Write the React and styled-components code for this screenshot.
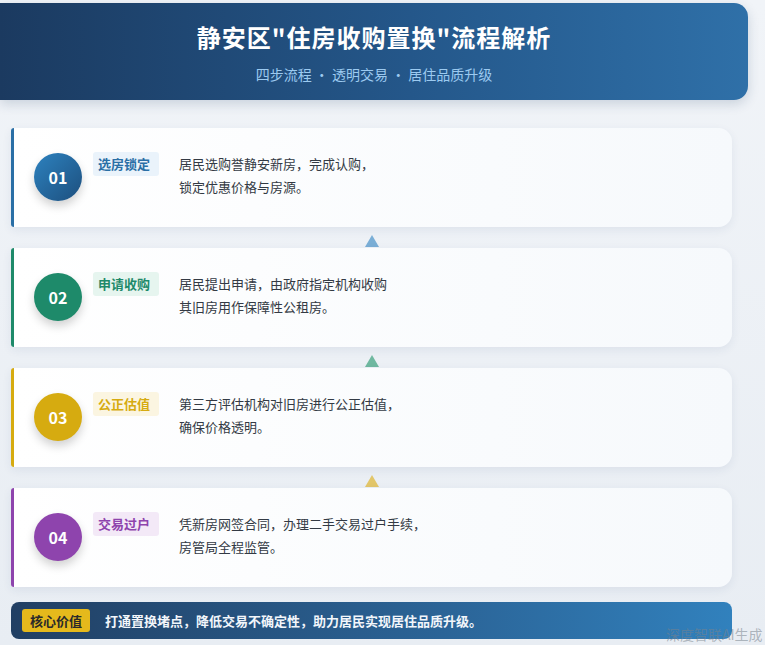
import React from "react";
import styled, { createGlobalStyle } from "styled-components";

const Global = createGlobalStyle`
  html, body { margin: 0; padding: 0; }
  body {
    width: 765px; height: 645px; overflow: hidden;
    background: linear-gradient(180deg, #f1f4f8 0%, #e8edf3 100%);
    font-family: "Noto Sans CJK SC", "Noto Sans", sans-serif;
  }
`;

const Page = styled.div`
  position: relative;
  width: 765px;
  height: 645px;
  padding: 3px 33px 0 0;
  box-sizing: border-box;
`;

const Header = styled.header`
  height: 97px;
  border-radius: 0 14px 14px 0;
  background: linear-gradient(90deg, #1b3a60 0%, #24578a 55%, #2f70a8 100%);
  box-shadow: 0 4px 12px rgba(30, 60, 100, 0.18);
  display: flex;
  flex-direction: column;
  align-items: center;
  justify-content: center;
  gap: 10px;
  margin-right: -16px;
`;

const Title = styled.h1`
  margin: 0;
  color: #fff;
  font-size: 24px;
  font-weight: 700;
  letter-spacing: 1px;
`;

const Sub = styled.div`
  color: #9ccaf0;
  font-size: 14px;
`;

const Steps = styled.div`
  display: flex;
  flex-direction: column;
  padding: 28px 0 0 11px;
`;

const Card = styled.div`
  height: 99px;
  box-sizing: border-box;
  background: linear-gradient(90deg, #ffffff 0%, #f6f9fc 100%);
  border-left: 3px solid ${(p) => p.$c};
  border-radius: 3px 14px 14px 3px;
  box-shadow: 0 3px 10px rgba(40, 70, 110, 0.08);
  display: flex;
  align-items: flex-start;
  padding: 24px 0 0 20px;
`;

const Num = styled.div`
  width: 48px;
  height: 48px;
  margin-top: 1px;
  border-radius: 50%;
  background: ${(p) => p.$c};
  color: #fff;
  font-size: 16px;
  font-weight: 700;
  display: flex;
  align-items: center;
  justify-content: center;
  box-shadow: 0 5px 10px rgba(0, 0, 0, 0.18);
  flex-shrink: 0;
`;

const Tag = styled.div`
  margin-left: 11px;
  padding: 1px 5px;
  height: 22px;
  line-height: 22px;
  border-radius: 3px;
  background: ${(p) => p.$bg};
  color: ${(p) => p.$c};
  font-size: 13px;
  font-weight: 700;
  width: 56px;
  flex-shrink: 0;
`;

const Desc = styled.div`
  margin-left: 20px;
  color: #333a44;
  font-size: 13px;
  line-height: 23px;
`;

const Arrow = styled.div`
  height: 21px;
  display: flex;
  justify-content: center;
  align-items: flex-end;
  padding-left: 0;
  width: 721px;
`;

const Core = styled.div`
  margin: 15px 0 0 11px;
  height: 37px;
  border-radius: 8px;
  background: linear-gradient(90deg, #213f63 0%, #2b6497 60%, #3181bd 100%);
  display: flex;
  align-items: center;
  padding-left: 11px;
  gap: 15px;
`;

const CoreTag = styled.span`
  background: #e5b91c;
  color: #2a2a2a;
  font-size: 13px;
  font-weight: 700;
  padding: 2px 8px;
  border-radius: 3px;
`;

const CoreText = styled.span`
  color: #f2f6fb;
  font-size: 13px;
  font-weight: 600;
`;

const Mark = styled.div`
  position: absolute;
  left: 666px;
  top: 624px;
  color: rgba(120, 130, 140, 0.55);
  font-size: 14px;
  white-space: nowrap;
`;

const steps = [
  { n: "01", c: "#2a6fa6", num: "linear-gradient(135deg,#2d82bf,#1d4f7e)", tagBg: "#eaf3fb", t: "选房锁定", colon: true, d: ["居民选购誉静安新房，完成认购，", "锁定优惠价格与房源。"] },
  { n: "02", c: "#1e8a6a", num: "#1e8a6a", tagBg: "#e6f5ef", t: "申请收购", d: ["居民提出申请，由政府指定机构收购", "其旧房用作保障性公租房。"] },
  { n: "03", c: "#d6ab10", num: "#d6ab10", tagBg: "#fbf5e1", t: "公正估值", d: ["第三方评估机构对旧房进行公正估值，", "确保价格透明。"] },
  { n: "04", c: "#8e44ad", num: "#8e44ad", tagBg: "#f3e9f7", t: "交易过户", d: ["凭新房网签合同，办理二手交易过户手续，", "房管局全程监管。"] },
];

const arrowColors = ["#7aaed6", "#6fb8a0", "#e2c66a"];

export default function App() {
  return (
    <Page>
      <Global />
      <Header>
        <Title>静安区"住房收购置换"流程解析</Title>
        <Sub>四步流程 · 透明交易 · 居住品质升级</Sub>
      </Header>
      <Steps>
        {steps.map((s, i) => (
          <React.Fragment key={s.n}>
            <Card $c={s.c}>
              <Num $c={s.num}>{s.n}</Num>
              <Tag $bg={s.tagBg} $c={s.c}>{s.t}</Tag>
              <Desc>{s.d[0]}<br />{s.d[1]}</Desc>
            </Card>
            {i < 3 && (
              <Arrow>
                <svg width="14" height="14" viewBox="0 0 14 14">
                  <polygon points="7,1 14,13 0,13" fill={arrowColors[i]} />
                </svg>
              </Arrow>
            )}
          </React.Fragment>
        ))}
      </Steps>
      <Core>
        <CoreTag>核心价值</CoreTag>
        <CoreText>打通置换堵点，降低交易不确定性，助力居民实现居住品质升级。</CoreText>
      </Core>
      <Mark>深度智联AI生成</Mark>
    </Page>
  );
}
